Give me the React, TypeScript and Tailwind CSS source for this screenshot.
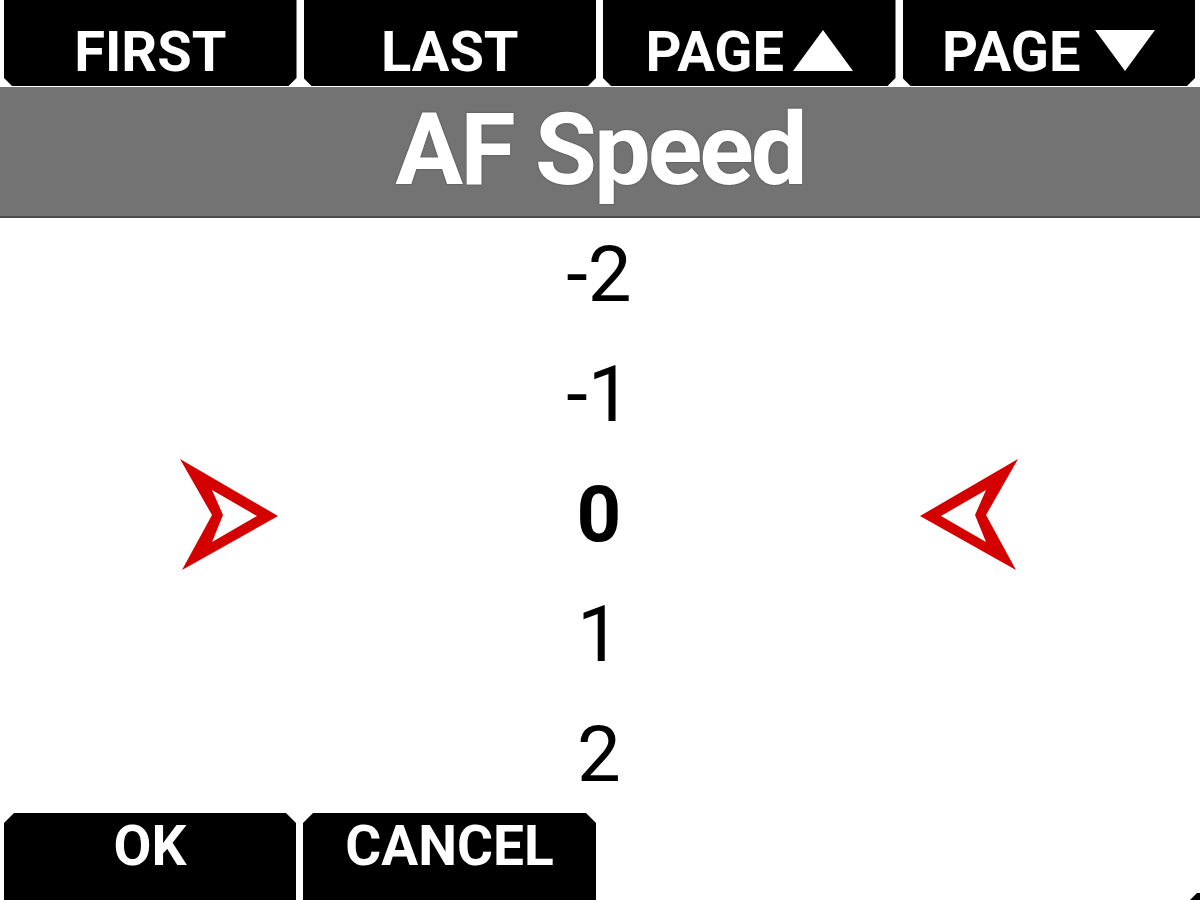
import React from "react";

const topClip =
  "[clip-path:polygon(0_0,100%_0,100%_calc(100%_-_8px),calc(100%_-_8px)_100%,8px_100%,0_calc(100%_-_8px))]";
const botClip =
  "[clip-path:polygon(10px_0,calc(100%_-_10px)_0,100%_10px,100%_100%,0_100%,0_10px)]";

function TriUp() {
  return (
    <svg width="60" height="41" viewBox="0 0 60 41" className="ml-[9px]">
      <polygon points="30,0 60,41 0,41" fill="#fff" />
    </svg>
  );
}
function TriDown() {
  return (
    <svg width="60" height="41" viewBox="0 0 60 41" className="ml-[15px]">
      <polygon points="0,0 60,0 30,41" fill="#fff" />
    </svg>
  );
}

function ArrowRight() {
  return (
    <svg width="98" height="112" viewBox="0 0 98 112">
      <path
        fillRule="evenodd"
        fill="#d40000"
        d="M0 0 L98 57 L2 111 L32 56 Z M32 31 L43 56 L32 83 L77 57 Z"
      />
    </svg>
  );
}
function ArrowLeft() {
  return (
    <svg width="98" height="112" viewBox="0 0 98 112">
      <path
        fillRule="evenodd"
        fill="#d40000"
        d="M98 0 L0 57 L96 111 L66 56 Z M66 31 L55 56 L66 83 L21 57 Z"
      />
    </svg>
  );
}

const values = ["-2", "-1", "0", "1", "2"];

export default function App() {
  return (
    <div
      className="w-[1200px] h-[900px] overflow-hidden bg-white flex flex-col"
      style={{ fontFamily: "Roboto, 'Noto Sans', sans-serif" }}
    >
      {/* top bar */}
      <div className="h-[87px] flex gap-[7px] pl-[4px] pr-[5px] bg-white shrink-0">
        {["FIRST", "LAST"].map((t) => (
          <div
            key={t}
            className={`flex-1 h-[86px] bg-black ${topClip} flex items-center justify-center pt-[18px]`}
          >
            <span className="text-white font-bold text-[56px] leading-none">{t}</span>
          </div>
        ))}
        <div
          className={`flex-1 h-[86px] bg-black ${topClip} flex items-center justify-center pt-[18px]`}
        >
          <span className="text-white font-bold text-[56px] leading-none">PAGE</span>
          <div className="mb-[3px]">
            <TriUp />
          </div>
        </div>
        <div
          className={`flex-1 h-[86px] bg-black ${topClip} flex items-center justify-center pt-[18px]`}
        >
          <span className="text-white font-bold text-[56px] leading-none">PAGE</span>
          <div className="mb-[3px]">
            <TriDown />
          </div>
        </div>
      </div>

      {/* title */}
      <div className="h-[131px] shrink-0 bg-[#737373] border-b-[2px] border-[#4c4c4c] flex items-center justify-center">
        <span className="text-white font-bold text-[101px] leading-none mt-[-4px] tracking-[-3px] [text-shadow:0_0_2px_rgba(0,0,0,0.45)]">
          AF Speed
        </span>
      </div>

      {/* values */}
      <div className="h-[595px] shrink-0">
        <div className="-mt-[3px] flex flex-col">
          {values.map((v) => (
            <div key={v} className="h-[120px] flex items-center pl-[180px] pr-[182px]">
              <div className="w-[98px] flex items-center">{v === "0" ? <ArrowRight /> : null}</div>
              <div
                className={`flex-1 text-center text-[78px] leading-none text-black ${
                  v === "0" ? "font-bold" : "font-normal"
                }`}
              >
                {v}
              </div>
              <div className="w-[98px] flex items-center">{v === "0" ? <ArrowLeft /> : null}</div>
            </div>
          ))}
        </div>
      </div>

      {/* bottom bar */}
      <div className="flex-1 flex gap-[7px] pl-[4px] pr-0">
        <div className={`w-[292px] bg-black ${botClip} flex justify-center pt-[6px]`}>
          <span className="text-white font-bold text-[55px] leading-none">OK</span>
        </div>
        <div className={`w-[293px] bg-black ${botClip} flex justify-center pt-[6px]`}>
          <span className="text-white font-bold text-[55px] leading-none">CANCEL</span>
        </div>
        <div className="flex-1" />
        <div className="w-[10px] mt-[80px] bg-black [clip-path:polygon(7px_0,100%_0,100%_100%,0_100%,0_7px)]" />
      </div>
    </div>
  );
}
